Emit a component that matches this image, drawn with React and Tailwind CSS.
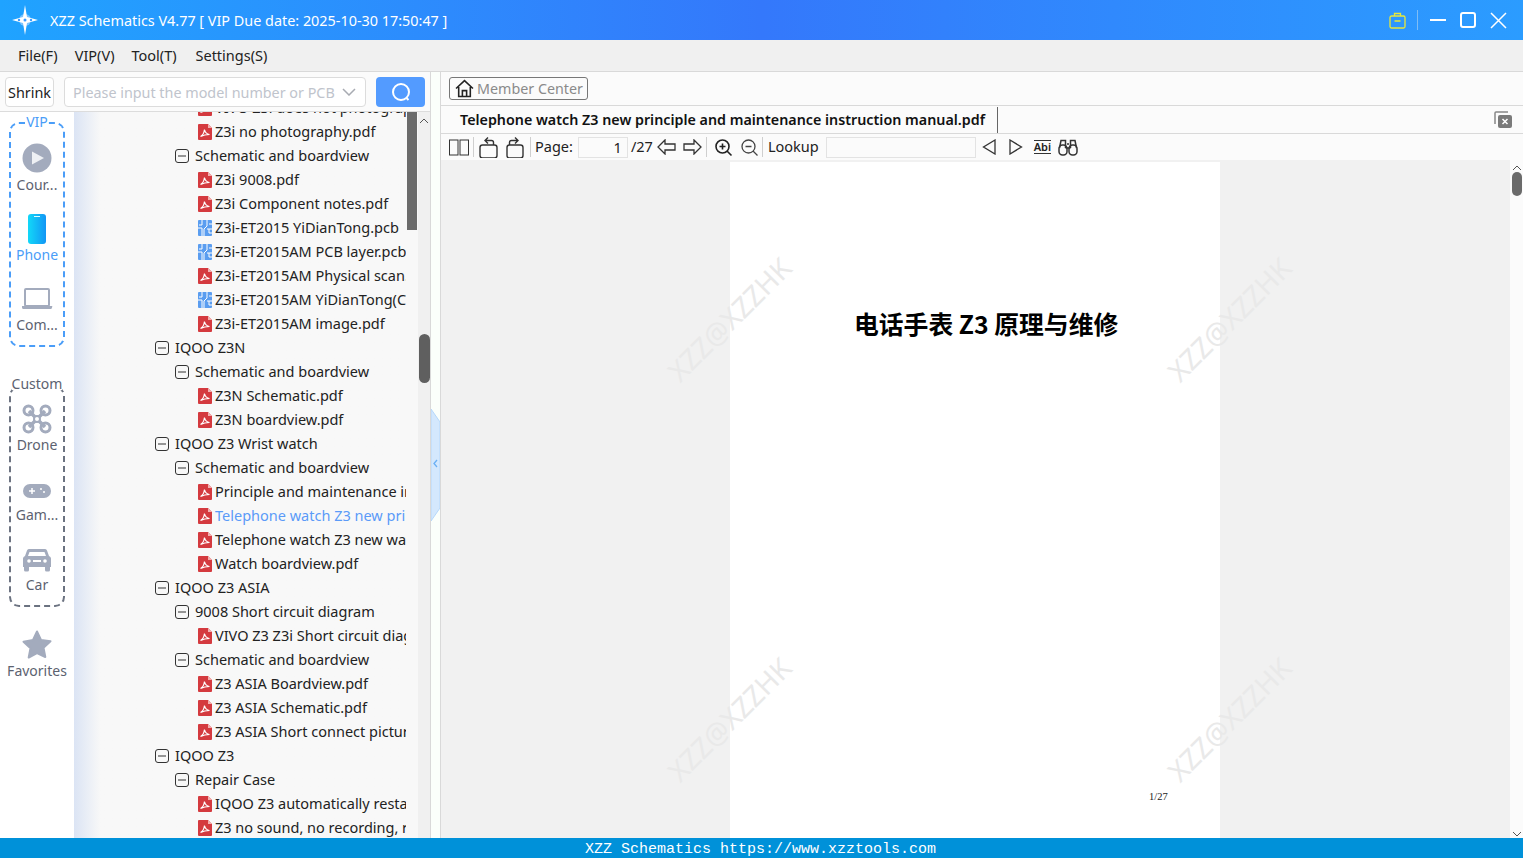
import React from "react"

const tree = [
  [2, "pdf", "VIVO Z3i does not photograph.pdf"],
  [2, "pdf", "Z3i no photography.pdf"],
  [1, "dir", "Schematic and boardview"],
  [2, "pdf", "Z3i 9008.pdf"],
  [2, "pdf", "Z3i Component notes.pdf"],
  [2, "pcb", "Z3i-ET2015 YiDianTong.pcb"],
  [2, "pcb", "Z3i-ET2015AM PCB layer.pcb"],
  [2, "pdf", "Z3i-ET2015AM Physical scan.pdf"],
  [2, "pcb", "Z3i-ET2015AM YiDianTong(C).pcb"],
  [2, "pdf", "Z3i-ET2015AM image.pdf"],
  [0, "dir", "IQOO Z3N"],
  [1, "dir", "Schematic and boardview"],
  [2, "pdf", "Z3N Schematic.pdf"],
  [2, "pdf", "Z3N boardview.pdf"],
  [0, "dir", "IQOO Z3 Wrist watch"],
  [1, "dir", "Schematic and boardview"],
  [2, "pdf", "Principle and maintenance instruction.pdf"],
  [2, "pdf", "Telephone watch Z3 new principle and maintenance", true],
  [2, "pdf", "Telephone watch Z3 new watch.pdf"],
  [2, "pdf", "Watch boardview.pdf"],
  [0, "dir", "IQOO Z3 ASIA"],
  [1, "dir", "9008 Short circuit diagram"],
  [2, "pdf", "VIVO Z3 Z3i Short circuit diagram.pdf"],
  [1, "dir", "Schematic and boardview"],
  [2, "pdf", "Z3 ASIA Boardview.pdf"],
  [2, "pdf", "Z3 ASIA Schematic.pdf"],
  [2, "pdf", "Z3 ASIA Short connect picture.pdf"],
  [0, "dir", "IQOO Z3"],
  [1, "dir", "Repair Case"],
  [2, "pdf", "IQOO Z3 automatically restarts.pdf"],
  [2, "pdf", "Z3 no sound, no recording, reboot.pdf"],
]

function PdfIcon() {
  return (
    <svg width="14" height="16" viewBox="0 0 14 16" className="shrink-0">
      <path d="M1 0h9l4 4v11a1 1 0 0 1-1 1H1a1 1 0 0 1-1-1V1a1 1 0 0 1 1-1z" fill="#d43a3f" />
      <path d="M10 0l4 4h-4z" fill="#f3b0b0" />
      <path d="M2.500 12.500c2-1 3.500-3.500 4-7 .5 3 2 4.500 5 5-3.500 0-6 .5-9 2z" fill="none" stroke="#fff" strokeWidth="1.200" />
    </svg>
  )
}

function PcbIcon() {
  return (
    <svg width="14" height="16" viewBox="0 0 14 16" className="shrink-0">
      <rect width="14" height="16" rx="1" fill="#5a9df0" />
      <path d="M4 0v5H1M4 8H0M4 8v8M9 0v6l-3 3v7M11 4h3M9 9h5M11 9v4h3" fill="none" stroke="#fff" strokeWidth="1" />
    </svg>
  )
}

function MinusBox() {
  return (
    <svg width="14" height="14" viewBox="0 0 14 14" className="shrink-0">
      <rect x=".5" y=".5" width="13" height="13" rx="2.500" fill="none" stroke="#333" />
      <path d="M3 7h8" stroke="#333" />
    </svg>
  )
}

function TreeRow({ level, type, label, active }) {
  const pad = level === 0 ? "pl-[81px]" : level === 1 ? "pl-[101px]" : "pl-[124px]"
  const gap = type === "dir" ? "gap-[6px]" : "gap-[3px]"
  return (
    <div className={`h-6 flex items-center whitespace-nowrap ${gap} ${pad} ${active ? "text-[#5b9bf8]" : "text-[#222]"}`}>
      {type === "dir" && <MinusBox />}
      {type === "pdf" && <PdfIcon />}
      {type === "pcb" && <PcbIcon />}
      <span>{label}</span>
    </div>
  )
}

function RailItem({ icon, label, active }) {
  return (
    <div className="h-[70px] flex flex-col items-center">
      <div className="h-[38px] flex items-end justify-center">{icon}</div>
      <div className={`mt-[2px] text-[14px] leading-[20px] whitespace-nowrap ${active ? "text-[#4a9df8]" : "text-[#5c6270]"}`}>{label}</div>
    </div>
  )
}

const railGray = "#a3abbd"

const railIcons = {
  play: (
    <svg width="30" height="30" viewBox="0 0 30 30">
      <circle cx="15" cy="15" r="14.500" fill={railGray} />
      <path d="M10 8.500l12 6.500-12 6.500z" fill="#eef0f4" />
    </svg>
  ),
  phone: (
    <svg width="18" height="30" viewBox="0 0 18 30" className="-mb-[1px]">
      <defs>
        <linearGradient id="ph" x1="0" x2="1" y1="0" y2="0">
          <stop offset="0" stopColor="#12d8f8" />
          <stop offset="1" stopColor="#1296f5" />
        </linearGradient>
      </defs>
      <rect width="18" height="30" rx="3" fill="url(#ph)" />
      <rect x="6" y="2" width="6" height="1" fill="#dff" />
    </svg>
  ),
  laptop: (
    <svg width="32" height="22" viewBox="0 0 32 22" className="mb-[3px]">
      <rect x="4" y="1" width="24" height="17" rx="1" fill="none" stroke={railGray} strokeWidth="2" />
      <path d="M1 18h30a1 1 0 0 1 0 1.500a2 2 0 0 1-1 1.500H2a2 2 0 0 1-1-1.500z" fill={railGray} />
    </svg>
  ),
  drone: (
    <svg width="30" height="30" viewBox="0 0 30 30" fill="none" stroke={railGray} className="-mb-[1px]">
      <circle cx="6.500" cy="6.500" r="4.500" strokeWidth="3" />
      <circle cx="23.500" cy="6.500" r="4.500" strokeWidth="3" />
      <circle cx="6.500" cy="23.500" r="4.500" strokeWidth="3" />
      <circle cx="23.500" cy="23.500" r="4.500" strokeWidth="3" />
      <path d="M7 7l16 16M23 7L7 23" strokeWidth="3.500" />
      <circle cx="15" cy="15" r="3" fill="#fff" strokeWidth="2" />
    </svg>
  ),
  game: (
    <svg width="28" height="14" viewBox="0 0 28 14" className="mb-[5px]">
      <rect width="28" height="14" rx="7" fill={railGray} />
      <path d="M6 7h6M9 4v6" stroke="#fff" strokeWidth="1.500" />
      <circle cx="18" cy="5" r="1" fill="#fff" />
      <circle cx="21" cy="8" r="1" fill="#fff" />
    </svg>
  ),
  car: (
    <svg width="28" height="24" viewBox="0 0 28 24" className="mb-[1px]">
      <path d="M6 1h16a2 2 0 0 1 2 1.500L26 8a3 3 0 0 1 2 3v8h-1v3a1.500 1.500 0 0 1-1.500 1.500h-2A1.500 1.500 0 0 1 22 22v-3H6v3a1.500 1.500 0 0 1-1.500 1.500h-2A1.500 1.500 0 0 1 1 22v-3H0v-8a3 3 0 0 1 2-3l2-5.500A2 2 0 0 1 6 1z" fill={railGray} />
      <path d="M6.500 4h15L23 8H5z" fill="#fff" />
      <circle cx="6" cy="13" r="1.800" fill="#fff" />
      <circle cx="22" cy="13" r="1.800" fill="#fff" />
      <rect x="10" y="12" width="8" height="2" fill="#fff" />
    </svg>
  ),
  star: (
    <svg width="30" height="29" viewBox="0 0 30 29">
      <path d="M15 1.500l4 8.500 9.500 1.300-7 6.500 1.800 9.200L15 23l-8.300 4.500 1.800-9.200-7-6.500L11 10z" fill={railGray} stroke={railGray} strokeWidth="2" strokeLinejoin="round" />
    </svg>
  ),
}

function Group({ title, color, titleClass, children, className }) {
  return (
    <div className={`relative w-[56px] border-2 border-dashed rounded-[10px] ${className}`} style={{ borderColor: color }}>
      <div className={`absolute left-0 right-0 flex justify-center ${titleClass}`}>
        <span className="bg-white text-[14px] leading-[12px] whitespace-nowrap" style={{ color: title === "VIP" ? "#4a9df8" : "#5c6270" }}>{title}</span>
      </div>
      {children}
    </div>
  )
}

function Watermark({ className }) {
  return (
    <div className={`absolute -rotate-45 text-[28px] leading-none whitespace-nowrap text-[#e9e9e9] ${className}`}>XZZ@XZZHK</div>
  )
}

function ToolSep() {
  return <div className="w-px h-[20px] bg-[#cfcfcf]" />
}

export default function App() {
  return (
    <div className="w-[1523px] h-[858px] overflow-hidden flex flex-col bg-[#fbfbfb] text-[15px] font-['Noto_Sans','Noto_Sans_CJK_SC',sans-serif]">
      {/* title bar */}
      <div className="h-10 shrink-0 flex items-center text-white bg-gradient-to-r from-[#1fa3ff] via-[#3478fb] to-[#2b9cff]">
        <div className="w-[50px] flex justify-center">
          <svg width="26" height="30" viewBox="0 0 26 30">
            <circle cx="13" cy="15" r="6" fill="#7cc4ff" />
            <path d="M13 0l2 12 11 3-11 3-2 12-2-12L0 15l11-3z" fill="#fff" />
            <circle cx="13" cy="15" r="1.500" fill="#3b9bff" />
            <circle cx="7" cy="15" r="1.200" fill="#3b9bff" />
            <circle cx="19" cy="15" r="1.200" fill="#3b9bff" />
          </svg>
        </div>
        <div className="pt-[1px] text-[14.400px] whitespace-nowrap">XZZ Schematics V4.77 [ VIP Due date: 2025-10-30 17:50:47 ]</div>
        <div className="ml-auto flex items-center">
          <svg width="18" height="17" viewBox="0 0 18 17" fill="none" stroke="#e8e83a" strokeWidth="1.300">
            <rect x="1" y="4" width="15" height="12" rx="1.500" />
            <path d="M5.500 4V1.500h6V4M5.500 9h6" />
          </svg>
          <div className="w-px h-5 bg-[#7fbdf5] ml-[10px] mr-[12px]" />
          <div className="w-4 h-[2px] bg-white mr-[14px]" />
          <div className="w-4 h-4 border-2 border-white rounded-[3px] mr-[14px]" />
          <svg width="17" height="17" viewBox="0 0 17 17" className="mr-[16px]">
            <path d="M1 1l15 15M16 1L1 16" stroke="#fff" strokeWidth="1.500" />
          </svg>
        </div>
      </div>

      {/* menu */}
      <div className="h-[32px] shrink-0 flex items-center gap-4 pl-[18px] pt-[1px] bg-[#f0f0f0] border-b border-[#d9d9d9] text-[#222] text-[14.500px]">
        <span>File(F)</span>
        <span className="ml-[1px]">VIP(V)</span>
        <span className="ml-[1px] w-[48px]">Tool(T)</span>
        <span>Settings(S)</span>
      </div>

      <div className="flex-1 min-h-0 flex">
        {/* left side */}
        <div className="w-[431px] shrink-0 flex flex-col border-r border-[#d9d9d9]">
          <div className="h-[40px] shrink-0 flex items-center pl-[5px] border-b border-[#dcdcdc] bg-[#fbfbfb]">
            <button className="w-[49px] h-[30px] pt-[2px] border border-[#dcdcdc] rounded bg-white text-[14.400px] text-[#222] whitespace-nowrap">Shrink</button>
            <div className="ml-[10px] w-[302px] h-[30px] border border-[#dcdcdc] rounded bg-white flex items-center justify-between pl-2 pr-[9px] text-[#c0c4cc] text-[14.350px]">
              <span className="pt-[2px] whitespace-nowrap">Please input the model number or PCB</span>
              <svg width="14" height="8" viewBox="0 0 14 8" fill="none" stroke="#a8abb2" strokeWidth="1.500">
                <path d="M1 1l6 6 6-6" />
              </svg>
            </div>
            <button className="ml-[10px] w-[49px] h-[30px] rounded bg-[#539bff] flex items-center justify-center">
              <svg width="20" height="20" viewBox="0 0 20 20" fill="none" stroke="#fff" strokeWidth="2">
                <circle cx="10" cy="10" r="8" />
                <path d="M15.500 16l2 2" />
              </svg>
            </button>
          </div>
          <div className="flex-1 min-h-0 flex">
            {/* rail */}
            <div className="w-[74px] shrink-0 bg-white pl-[9px] pt-[10px]">
              <Group title="VIP" color="#4a9df8" titleClass="-top-[8px]" className="h-[225px]">
                <div className="pt-[11px] -ml-[2px] w-[56px]">
                  <RailItem icon={railIcons.play} label="Cour..." />
                  <RailItem icon={railIcons.phone} label="Phone" active />
                  <RailItem icon={railIcons.laptop} label="Com..." />
                </div>
              </Group>
              <Group title="Custom" color="#6b7280" titleClass="-top-[10px]" className="h-[221px] mt-[39px]">
                <div className="pt-[7px] -ml-[2px] w-[56px]">
                  <RailItem icon={railIcons.drone} label="Drone" />
                  <RailItem icon={railIcons.game} label="Gam..." />
                  <RailItem icon={railIcons.car} label="Car" />
                </div>
              </Group>
              <div className="-ml-[9px] w-[74px] mt-[14px]">
                <RailItem icon={railIcons.star} label="Favorites" />
              </div>
            </div>
            {/* tree */}
            <div className="w-[332px] shrink-0 overflow-hidden bg-gradient-to-r from-[#dbe4f4] via-[#f8f8f8] via-[8%] to-[#f8f8f8]">
              <div className="-mt-[16px] text-[14.500px]">
                {tree.map((r, i) => (
                  <TreeRow key={i} level={r[0]} type={r[1]} label={r[2]} active={r[3]} />
                ))}
              </div>
            </div>
            <div className="w-[12px] shrink-0 pl-[1px] bg-[#f8f8f8]">
              <div className="w-[10px] h-[118px] bg-[#6b6b6b]" />
            </div>
            <div className="flex-1 relative bg-[#f0f0f0]">
              <svg width="10" height="6" viewBox="0 0 10 6" className="absolute top-[6px] left-[1px]">
                <path d="M1 5l4-4 4 4" fill="none" stroke="#555" />
              </svg>
              <div className="absolute top-[222px] left-[1px] right-0 h-[49px] bg-[#5f5f5f] rounded-full" />
            </div>
          </div>
        </div>

        {/* collapse strip */}
        <div className="relative w-[9px] shrink-0 bg-[#fbfffb] border-r border-[#d9d9d9] box-content">
          <svg width="9" height="112" viewBox="0 0 9 112" className="absolute top-[337px] left-0">
            <path d="M0 0l9 13v86L0 112z" fill="#d4e8fd" stroke="#b6d8fb" />
            <path d="M6 51l-3 3.500 3 3.500" fill="none" stroke="#6bb0f5" strokeWidth="1.300" />
          </svg>
        </div>

        {/* right side */}
        <div className="flex-1 min-w-0 flex flex-col">
          <div className="h-[34px] shrink-0 flex items-center pl-2 border-b border-[#d9d9d9]">
            <button className="h-[23px] w-[139px] border border-[#777] rounded-[3px] flex items-center pl-[5px] gap-[3px] text-[#8a8a8a] text-[14.300px]">
              <svg width="19" height="19" viewBox="0 0 18 18" fill="none" stroke="#222" strokeWidth="1.500">
                <path d="M1 9l8-7.500L17 9M3.500 7.500V16.500h11V7.500M7 16.500V11h4v5.500" />
              </svg>
              <span className="whitespace-nowrap">Member Center</span>
            </button>
          </div>
          <div className="h-[28px] shrink-0 flex items-center border-b border-[#d9d9d9]">
            <div className="h-[26px] flex items-center pl-[19px] pr-[12px] border-r border-[#666] text-[14.300px] font-semibold text-[#111] whitespace-nowrap">
              Telephone watch Z3 new principle and maintenance instruction manual.pdf
            </div>
            <svg width="19" height="18" viewBox="0 0 19 18" className="ml-auto mr-[10px]">
              <path d="M14 1H2a1 1 0 0 0-1 1v11" fill="none" stroke="#888" strokeWidth="1.500" />
              <rect x="4" y="4" width="14" height="13" rx="2" fill="#7a7a7a" />
              <path d="M8.500 8l5 5M13.500 8l-5 5" stroke="#fff" strokeWidth="1.500" />
            </svg>
          </div>
          <div className="h-[26px] shrink-0 flex items-center pl-2 text-[#222] text-[14.500px]">
            <svg width="20" height="17" viewBox="0 0 20 17" fill="none" stroke="#333">
              <rect x=".5" y="1" width="8.500" height="15" />
              <rect x="11" y="1" width="8.500" height="15" />
            </svg>
            <div className="ml-[4px]"><ToolSep /></div>
            <svg width="20" height="22" viewBox="0 0 20 22" fill="none" stroke="#333" strokeWidth="1.400" className="ml-[4px]">
              <rect x="2" y="9" width="17" height="13" rx="2.500" />
              <path d="M15.500 9V6.500a2 2 0 0 0-2-2H7M10 1.500L7 4.500l3 3" />
            </svg>
            <svg width="20" height="22" viewBox="0 0 20 22" fill="none" stroke="#333" strokeWidth="1.400" className="ml-[6px]">
              <rect x="3" y="9" width="16" height="13" rx="2.500" />
              <path d="M5.500 9V6.500a2 2 0 0 1 2-2H14M11 1.500l3 3-3 3" />
            </svg>
            <div className="ml-[6px]"><ToolSep /></div>
            <span className="ml-[4px]">Page:</span>
            <div className="ml-[5px] w-[50px] h-[21px] border border-[#e3e3e3] bg-[#fbfbfb] text-right pr-[5px] leading-[19px]">1</div>
            <span className="ml-[3px]">/27</span>
            <svg width="19" height="16" viewBox="0 0 19 16" fill="none" stroke="#333" strokeWidth="1.300" className="ml-[4px]">
              <path d="M8 1L1 8l7 7v-4h10V5H8z" />
            </svg>
            <svg width="19" height="16" viewBox="0 0 19 16" fill="none" stroke="#333" strokeWidth="1.300" className="ml-[7px]">
              <path d="M11 1l7 7-7 7v-4H1V5h10z" />
            </svg>
            <div className="ml-[4px]"><ToolSep /></div>
            <svg width="19" height="19" viewBox="0 0 19 19" fill="none" stroke="#222" strokeWidth="1.600" className="ml-[7px]">
              <circle cx="8.500" cy="8.500" r="6.500" />
              <path d="M13 13l4.500 4.500M5.500 8.500h6M8.500 5.500v6" />
            </svg>
            <svg width="19" height="19" viewBox="0 0 19 19" fill="none" stroke="#444" strokeWidth="1.300" className="ml-[7px]">
              <circle cx="8.500" cy="8.500" r="6.500" />
              <path d="M13 13l4.500 4.500M5.500 8.500h6" />
            </svg>
            <div className="ml-[3px]"><ToolSep /></div>
            <span className="ml-[5px]">Lookup</span>
            <div className="ml-[7px] w-[150px] h-[21px] border border-[#e3e3e3] bg-[#fbfbfb]" />
            <svg width="14" height="16" viewBox="0 0 14 16" fill="none" stroke="#333" strokeWidth="1.300" className="ml-[6px]">
              <path d="M13 1L1.500 8 13 15z" />
            </svg>
            <svg width="14" height="16" viewBox="0 0 14 16" fill="none" stroke="#333" strokeWidth="1.300" className="ml-[13px]">
              <path d="M1 1l11.500 7L1 15z" />
            </svg>
            <span className="ml-[11px] text-[11px] font-semibold leading-[12px] border-y border-[#333]">Abi</span>
            <svg width="20" height="17" viewBox="0 0 20 17" fill="none" stroke="#333" strokeWidth="1.500" className="ml-[7px]">
              <rect x="1" y="6" width="8" height="10" rx="3.500" />
              <rect x="11" y="6" width="8" height="10" rx="3.500" />
              <path d="M1.500 9L3 1.500h4.500V9M18.500 9L17 1.500h-4.500V9M9 5h2M7.500 9h5" />
            </svg>
          </div>

          {/* pdf view */}
          <div className="flex-1 min-h-0 flex bg-[#f1f1f1]">
            <div className="relative flex-1 min-w-0 overflow-hidden">
              <div className="mt-[2px] ml-[289px] w-[490px] h-full bg-white flex flex-col">
                <div className="mt-[144px] ml-[124px] text-[24.800px] leading-[34px] font-bold text-black whitespace-nowrap font-['Noto_Sans_CJK_SC',sans-serif]">电话手表 Z3 原理与维修</div>
                <div className="mt-auto mb-[37px] ml-[419px] text-[10.500px] leading-[12px] text-[#222] font-['Liberation_Serif',serif]">1/27</div>
              </div>
              <Watermark className="left-[208px] top-[145px]" />
              <Watermark className="left-[708px] top-[145px]" />
              <Watermark className="left-[208px] top-[545px]" />
              <Watermark className="left-[708px] top-[545px]" />
            </div>
            <div className="relative w-[13px] shrink-0 bg-[#fbfbfb]">
              <svg width="10" height="6" viewBox="0 0 10 6" className="absolute top-[5px] left-[2px]">
                <path d="M1 5l4-4 4 4" fill="none" stroke="#555" />
              </svg>
              <div className="absolute top-[12px] left-[2px] w-[10px] h-[24px] bg-[#6b6b6b] rounded-full" />
              <svg width="10" height="6" viewBox="0 0 10 6" className="absolute bottom-[1px] left-[2px]">
                <path d="M1 1l4 4 4-4" fill="none" stroke="#555" />
              </svg>
            </div>
          </div>
        </div>
      </div>

      {/* status bar */}
      <div className="h-5 shrink-0 bg-[#0091d9] flex items-center justify-center pt-[4px] pr-[2px] text-white text-[15px] font-['Liberation_Mono',monospace]">
        XZZ Schematics https://www.xzztools.com
      </div>
    </div>
  )
}
